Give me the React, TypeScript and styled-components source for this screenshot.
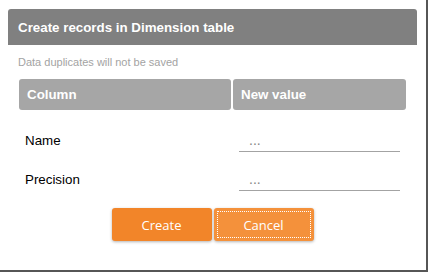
import styled, { createGlobalStyle } from "styled-components";

const GlobalStyle = createGlobalStyle`
   html, body { margin: 0; padding: 0; background: #fff; }
   body { font-family: "Liberation Sans", Arial, sans-serif; }
`;

const Frame = styled.div`
   box-sizing: border-box;
   width: 428px;
   height: 272px;
   border-right: 2px solid #565656;
   border-bottom: 2px solid #565656;
   padding: 9px 0 0 8px;
   background: #fff;
`;

const TitleBar = styled.div`
   box-sizing: border-box;
   width: 409px;
   height: 36px;
   background: #808080;
   border-radius: 3px 3px 0 0;
   padding: 0 0 0 10px;
   display: flex;
   align-items: center;
   color: #fff;
   font-size: 13.33px;
   font-weight: bold;
`;

const Note = styled.div`
   margin: 10px 0 0 10px;
   height: 14px;
   font-size: 11px;
   line-height: 14px;
   color: #a3a3a3;
`;

const Grid = styled.div`
   margin: 10px 0 0 11px;
   display: grid;
   grid-template-columns: 212px 173px;
   column-gap: 2px;
`;

const HeadCell = styled.div`
   box-sizing: border-box;
   height: 31px;
   background: #a6a6a6;
   border-radius: 3px;
   padding-left: 8px;
   display: flex;
   align-items: center;
   color: #fff;
   font-size: 13.33px;
   font-weight: bold;
`;

const Label = styled.div<{ $top: number }>`
   height: 39px;
   margin-top: ${({ $top }) => $top}px;
   padding-left: 6px;
   display: flex;
   align-items: center;
   font-size: 13.33px;
   color: #000;
`;

const ValueCell = styled.div<{ $top: number }>`
   height: 39px;
   margin-top: ${({ $top }) => $top}px;
   display: flex;
   align-items: center;
`;

const ValueInput = styled.input`
   box-sizing: border-box;
   width: 161px;
   height: 22px;
   margin: 0 0 0 6px;
   padding: 0 0 0 10px;
   border: none;
   border-bottom: 1px solid #a3a3a3;
   outline: none;
   background: transparent;
   font-family: "Liberation Sans", Arial, sans-serif;
   font-size: 14px;
   &::placeholder { color: #868686; }
`;

const Buttons = styled.div`
   width: 409px;
   margin-top: 9px;
   display: flex;
   justify-content: center;
   gap: 2px;
`;

const Button = styled.button<{ $focused?: boolean }>`
   box-sizing: border-box;
   width: 100px;
   height: 33px;
   border: none;
   border-radius: 3px;
   background: ${({ $focused }) => ($focused ? "#f4913b" : "#f28529")};
   box-shadow: 0 1px 3px rgba(0, 0, 0, 0.3);
   color: #fff;
   font-family: "Open Sans", sans-serif;
   font-size: 13px;
   outline: ${({ $focused }) => ($focused ? "1px dotted #fff" : "none")};
   outline-offset: -4px;
   cursor: pointer;
`;

export default function App() {
   return (
      <>
         <GlobalStyle />
         <Frame>
            <TitleBar>Create records in Dimension table</TitleBar>
            <Note>Data duplicates will not be saved</Note>
            <Grid>
               <HeadCell>Column</HeadCell>
               <HeadCell>New value</HeadCell>
               <Label $top={11}>Name</Label>
               <ValueCell $top={11}>
                  <ValueInput placeholder="..." />
               </ValueCell>
               <Label $top={0}>Precision</Label>
               <ValueCell $top={0}>
                  <ValueInput placeholder="..." />
               </ValueCell>
            </Grid>
            <Buttons>
               <Button>Create</Button>
               <Button $focused>Cancel</Button>
            </Buttons>
         </Frame>
      </>
   );
}
